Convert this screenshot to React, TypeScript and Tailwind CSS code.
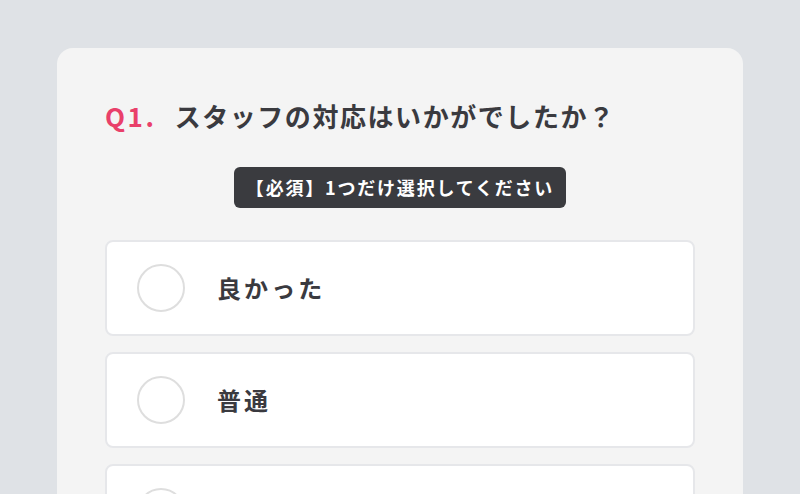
import React, { useState } from 'react';

const options = ['良かった', '普通', '悪かった'];

const font = "font-['Noto_Sans_CJK_JP','Noto_Sans',sans-serif]";

const App: React.FC = () => {
  const [selected, setSelected] = useState<string | null>(null);

  return (
    <div className={`min-h-screen bg-[#dfe2e6] pt-12 ${font}`}>
      <div className="mx-auto w-[686px] rounded-2xl bg-[#f4f4f4] px-12 pt-12 pb-12">
        <h2 className="flex items-center gap-[18px] text-[26px] font-bold leading-[39px] tracking-[0.06em] text-[#3a3a3f]">
          <span className="text-[#e9406a] tracking-[0.1em]">Q1.</span>
          <span>スタッフの対応はいかがでしたか？</span>
        </h2>

        <div className="mt-8 flex justify-center">
          <div className="flex h-[41px] items-center rounded-md bg-[#3a3b3f] px-3 text-[18px] font-bold tracking-[0.1em] text-white">
            【必須】1つだけ選択してください
          </div>
        </div>

        <div className="mt-8 flex flex-col gap-4">
          {options.map((opt) => (
            <button
              key={opt}
              onClick={() => setSelected(opt)}
              className="flex h-24 items-center gap-8 rounded-lg border-2 border-[#e6e7ea] bg-white pl-[30px] text-left"
            >
              <span
                className={`h-12 w-12 shrink-0 rounded-full border-2 ${
                  selected === opt ? 'border-[#e9406a] bg-[#e9406a]' : 'border-[#dedede] bg-white'
                }`}
              />
              <span className="text-[24px] font-bold tracking-[0.13em] text-[#3a3a3f]">{opt}</span>
            </button>
          ))}
        </div>
      </div>
    </div>
  );
};

export default App;
